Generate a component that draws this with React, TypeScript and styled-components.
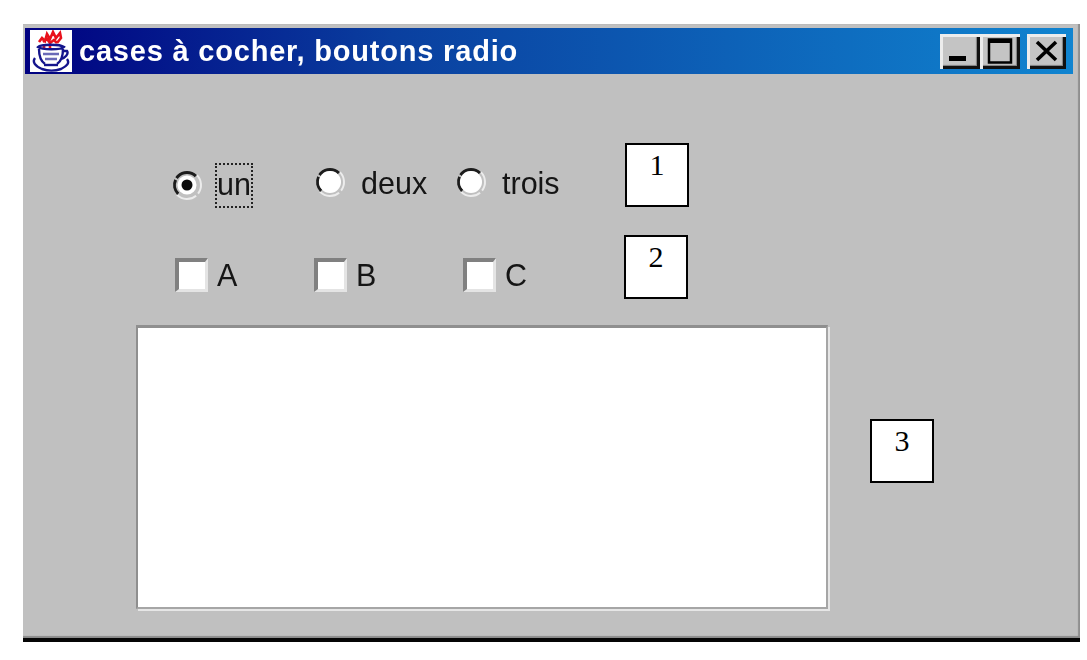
import React from "react";
import styled, { createGlobalStyle } from "styled-components";

const Global = createGlobalStyle`
  html, body { margin: 0; padding: 0; background: #fff; }
  body { width: 1087px; height: 660px; overflow: hidden; font-family: "Liberation Sans", Arial, sans-serif; }
`;

const Page = styled.div`
  width: 1087px;
  height: 660px;
  padding: 24px 0 0 23px;
  box-sizing: border-box;
  position: relative;
`;

const Window = styled.div`
  width: 1057px;
  height: 618px;
  box-sizing: border-box;
  background: #c0c0c0;
  padding: 4px 7px 0 2px;
  border-bottom: 4px solid #050505;
  box-shadow: inset 0 -3px 1px -1px #8a8a8a, inset -2px 0 1px #8f8f8f;
  display: flex;
  flex-direction: column;
`;

const TitleBar = styled.header`
  height: 46px;
  flex: none;
  box-sizing: border-box;
  background: linear-gradient(90deg, #000080 0%, #0a3f9f 35%, #1084d0 100%);
  display: flex;
  align-items: center;
  padding: 0 7px 0 5px;
`;

const AppIcon = styled.svg`
  width: 42px;
  height: 42px;
  flex: none;
  filter: blur(0.6px);
`;

const Title = styled.h1`
  flex: 1;
  margin: 0 0 0 7px;
  font: bold 29px/1 "Liberation Sans", Arial, sans-serif;
  letter-spacing: 0.8px;
  color: #fff;
  white-space: nowrap;
  filter: blur(0.5px);
`;

const Controls = styled.div`
  display: flex;
  align-items: stretch;
  height: 35px;
`;

const Control = styled.button<{ $gap?: number; $width?: number }>`
  width: ${(p) => p.$width ?? 40}px;
  height: 35px;
  margin: 0 0 0 ${(p) => p.$gap ?? 0}px;
  padding: 0;
  box-sizing: border-box;
  background: #c4c4c4;
  border: 0;
  box-shadow: inset 3px 3px 0 #ececec, inset -3px -3px 0 #111, inset -4px -4px 1px #808080;
  display: flex;
  align-items: center;
  justify-content: center;
  filter: blur(0.5px);
  svg { width: 30px; height: 29px; display: block; }
`;

const Content = styled.main`
  flex: 1;
  display: flex;
  flex-direction: column;
  padding-left: 111px;
`;

const OptionRow = styled.div<{ $top: number; $indent: number }>`
  display: flex;
  align-items: center;
  height: 44px;
  margin-top: ${(p) => p.$top}px;
  padding-left: ${(p) => p.$indent}px;
`;

const Option = styled.label<{ $width: number }>`
  width: ${(p) => p.$width}px;
  flex: none;
  display: flex;
  align-items: center;
  color: #151515;
  font-size: 30.5px;
  line-height: 34px;
  filter: blur(0.55px);
`;

const RadioSvg = styled.svg<{ $drop: number }>`
  width: 30px;
  height: 30px;
  flex: none;
  margin: ${(p) => p.$drop}px 16px 0 0;
  overflow: visible;
`;

const CheckMark = styled.span`
  width: 33px;
  height: 34px;
  flex: none;
  box-sizing: border-box;
  margin: 0 9px 0 0;
  background: #fff;
  border-style: solid;
  border-width: 4px 3px 3px 4px;
  border-color: #808080 #e4e4e4 #e4e4e4 #808080;
`;

const FocusLabel = styled.span`
  outline: 2px dotted #222;
  outline-offset: -1px;
  padding: 3px 1px 6px 1px;
  line-height: 34px;
  margin: 5px 0 0 -2px;
`;

const TextArea = styled.div`
  width: 692px;
  height: 284px;
  box-sizing: border-box;
  margin-top: 28px;
  background: #fff;
  border-style: solid;
  border-width: 3px 2px 2px 2px;
  border-color: #8f8f8f #a6a6a6 #a6a6a6 #8f8f8f;
  box-shadow: 2px 2px 0 #e6e6e6;
`;

const Callout = styled.div<{ $x: number; $y: number }>`
  position: absolute;
  left: ${(p) => p.$x}px;
  top: ${(p) => p.$y}px;
  width: 64px;
  height: 64px;
  box-sizing: border-box;
  background: #fff;
  border: 2px solid #000;
  color: #000;
  font: 30px/1 "Liberation Serif", "Times New Roman", serif;
  text-align: center;
  padding-top: 5px;
`;

const Radio = ({ checked }: { checked?: boolean }) => (
  <RadioSvg viewBox="0 0 30 30" $drop={checked ? 4 : -2}>
    <circle cx="15" cy="15" r="14" fill="none" stroke="#ececec" strokeWidth="2" strokeDasharray="20 3 21 44" transform="rotate(-45 15 15)" />
    <circle cx="15" cy="15" r="12.5" fill="none" stroke="#1c1c1c" strokeWidth="3" strokeDasharray="15 2 22 40" transform="rotate(135 15 15)" />
    <circle cx="15" cy="15" r={checked ? 9.5 : 11} fill="#fff" />
    {checked && <circle cx="15" cy="15" r="5.5" fill="#0c0c0c" />}
  </RadioSvg>
);

const CoffeeIcon = () => (
  <AppIcon viewBox="0 0 42 42">
    <rect width="42" height="42" fill="#fff" />
    <path d="M9 12l3-4 3 3 2-7 3 5 3-7 3 6 4-5 1 5-4 5M13 12l4-3 3 4 4-3 3 3M14 14v4M20 13v5" fill="none" stroke="#e8121c" strokeWidth="2.6" />
    <path d="M8 17c3-3 22-3 26 0-3 3-22 3-26 0zM9 19c0 8 3 13 6 15M33 19c0 8-3 13-6 15M33 21h4c2 3-2 7-6 8M5 28c-3 4 0 8 7 11 6 2 13 2 19 0 6-3 9-6 6-10" fill="none" stroke="#14148c" strokeWidth="2.4" />
    <path d="M13 24h16M15 29h12" stroke="#6a6ab8" strokeWidth="2.4" />
    <path d="M14 35h14" stroke="#14148c" strokeWidth="2.4" />
  </AppIcon>
);

export default function App() {
  return (
    <Page>
      <Global />
      <Window>
        <TitleBar>
          <CoffeeIcon />
          <Title>cases à cocher, boutons radio</Title>
          <Controls>
            <Control aria-label="Réduire">
              <svg viewBox="0 0 30 29"><rect x="4" y="19" width="17" height="5" fill="#000" /></svg>
            </Control>
            <Control aria-label="Agrandir">
              <svg viewBox="0 0 30 29"><path d="M4 2.5v23h22v-23z" fill="none" stroke="#000" strokeWidth="2.5" /><rect x="3" y="2" width="24" height="4" fill="#000" /></svg>
            </Control>
            <Control $gap={7} $width={39} aria-label="Fermer">
              <svg viewBox="0 0 30 29"><path d="M5 5l19 18M24 5L5 23" fill="none" stroke="#000" strokeWidth="3.6" /></svg>
            </Control>
          </Controls>
        </TitleBar>
        <Content>
          <OptionRow $top={87} $indent={36}>
            <Option $width={143}><Radio checked /><FocusLabel>un</FocusLabel></Option>
            <Option $width={141}><Radio />deux</Option>
            <Option $width={120}><Radio />trois</Option>
          </OptionRow>
          <OptionRow $top={48} $indent={39}>
            <Option $width={139}><CheckMark />A</Option>
            <Option $width={149}><CheckMark />B</Option>
            <Option $width={100}><CheckMark />C</Option>
          </OptionRow>
          <TextArea />
        </Content>
      </Window>
      <Callout $x={625} $y={143}>1</Callout>
      <Callout $x={624} $y={235}>2</Callout>
      <Callout $x={870} $y={419}>3</Callout>
    </Page>
  );
}
